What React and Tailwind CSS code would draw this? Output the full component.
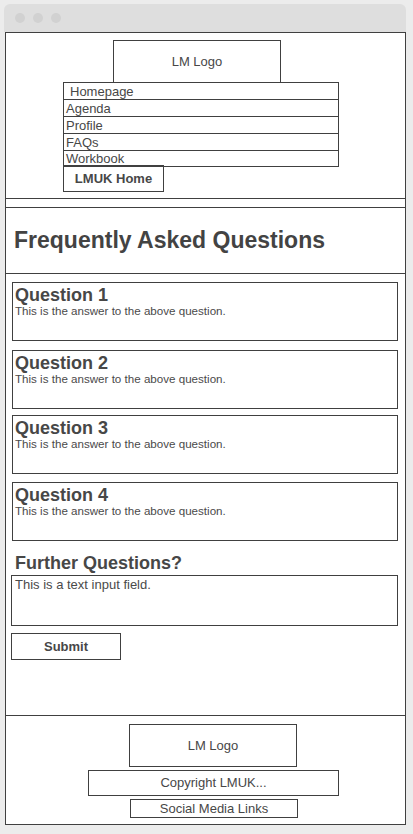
import React from "react";

const NAV = ["Homepage", "Agenda", "Profile", "FAQs", "Workbook"];

const QUESTIONS = [
  { title: "Question 1", gap: "mt-0" },
  { title: "Question 2", gap: "mt-[9px]" },
  { title: "Question 3", gap: "mt-[6px]" },
  { title: "Question 4", gap: "mt-[8px]" },
];

function Box({ className = "", children }) {
  return (
    <div
      className={`flex items-center justify-center border border-[#404040] text-[13px] ${className}`}
    >
      {children}
    </div>
  );
}

export default function App() {
  return (
    <div className="min-h-[834px] bg-[#ececec] pt-[4px] font-['Liberation_Sans',Arial,sans-serif] text-[#474747]">
      {/* browser chrome */}
      <div className="ml-[4px] flex h-[28px] w-[402px] items-center gap-[8px] rounded-t-[6px] bg-[#dedede] pl-[11px]">
        <span className="h-[10px] w-[10px] rounded-full bg-[#d1d1d1]" />
        <span className="h-[10px] w-[10px] rounded-full bg-[#d1d1d1]" />
        <span className="h-[10px] w-[10px] rounded-full bg-[#d1d1d1]" />
      </div>

      <div className="ml-[5px] w-[401px] border border-[#404040] bg-white">
        {/* header */}
        <div className="border-b border-[#404040] pb-[6px] pt-[7px]">
          <Box className="ml-[107px] h-[43px] w-[168px]">LM Logo</Box>
          <ul className="-mt-px ml-[57px] w-[276px] border border-[#404040] text-[13px]">
            {NAV.map((item, i) => (
              <li
                key={item}
                className={`flex items-end leading-[15px] ${
                  i === 0 ? "pl-[6px]" : "pl-[2px]"
                } ${i < NAV.length - 1 ? "h-[17px] border-b border-[#404040]" : "h-[15px]"}`}
              >
                {item}
              </li>
            ))}
          </ul>
          <Box className="-mt-[2px] ml-[57px] h-[27px] w-[101px] font-bold">LMUK Home</Box>
        </div>

        <div className="h-[9px] border-b border-[#404040]" />

        {/* title */}
        <div className="flex h-[66px] items-center border-b border-[#404040] pl-[8px]">
          <h1 className="text-[23px] font-bold leading-none text-[#434343]">
            Frequently Asked Questions
          </h1>
        </div>

        {/* main */}
        <div className="h-[442px] border-b border-[#404040] pt-[8px]">
          {QUESTIONS.map((q) => (
            <div
              key={q.title}
              className={`${q.gap} ml-[6px] h-[59px] w-[386px] border border-[#404040] pl-[2px] pt-[3px]`}
            >
              <h2 className="text-[18px] font-bold leading-[18px]">{q.title}</h2>
              <p className="text-[11.6px] leading-[14px] text-[#4a4a4a]">
                This is the answer to the above question.
              </p>
            </div>
          ))}

          <h2 className="ml-[9px] mt-[13px] text-[18px] font-bold leading-[18px]">
            Further Questions?
          </h2>
          <div className="ml-[5px] mt-[3px] h-[51px] w-[387px] border border-[#404040] pl-[3px] pt-px text-[13px] leading-[15px] text-[#4a4a4a]">
            This is a text input field.
          </div>
          <Box className="ml-[5px] mt-[7px] h-[27px] w-[110px] font-bold">Submit</Box>
        </div>

        {/* footer */}
        <div className="pb-[6px] pt-[8px]">
          <Box className="ml-[123px] h-[43px] w-[168px]">LM Logo</Box>
          <Box className="ml-[82px] mt-[3px] h-[26px] w-[251px]">Copyright LMUK...</Box>
          <Box className="ml-[124px] mt-[3px] h-[19px] w-[168px]">Social Media Links</Box>
        </div>
      </div>
    </div>
  );
}
